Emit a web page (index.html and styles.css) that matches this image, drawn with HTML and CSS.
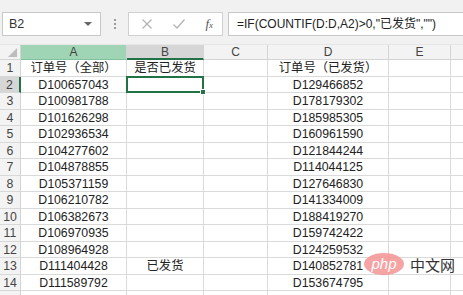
FILE: index.html
```html
<!DOCTYPE html>
<html>
<head>
<meta charset="utf-8">
<link rel="stylesheet" href="styles.css">
</head>
<body>
<div class="app">
  <div class="toolbar">
    <div class="namebox"><span>B2</span><span class="caret"></span></div>
    <div class="dots"><i></i><i></i><i></i></div>
    <div class="fbtns">
      <svg class="ic" width="12" height="12" viewBox="0 0 12 12"><path d="M1.5 1.5L10.5 10.5M10.5 1.5L1.5 10.5" stroke="#b4b4b4" stroke-width="1.3" fill="none"/></svg>
      <svg class="ic" width="14" height="12" viewBox="0 0 14 12"><path d="M1.5 6.5L5 10L12.5 1.5" stroke="#b4b4b4" stroke-width="1.3" fill="none"/></svg>
      <span class="fx"><i>f</i><sub>x</sub></span>
    </div>
    <div class="fbox">=IF(COUNTIF(D:D,A2)&gt;0,"已发货","")</div>
  </div>
  <div class="sheet">
    <div class="corner"></div>
    <div class="ch hlA">A</div>
    <div class="ch selB">B</div>
    <div class="ch">C</div>
    <div class="ch">D</div>
    <div class="ch">E</div>
    <div class="ch"></div>

    <div class="rh">1</div><div class="c">订单号（全部）</div><div class="c">是否已发货</div><div class="c"></div><div class="c">订单号（已发货）</div><div class="c"></div><div class="c"></div>
    <div class="rh sel">2</div><div class="c">D100657043</div><div class="c active"><span class="handle"></span></div><div class="c"></div><div class="c">D129466852</div><div class="c"></div><div class="c"></div>
    <div class="rh">3</div><div class="c">D100981788</div><div class="c"></div><div class="c"></div><div class="c">D178179302</div><div class="c"></div><div class="c"></div>
    <div class="rh">4</div><div class="c">D101626298</div><div class="c"></div><div class="c"></div><div class="c">D185985305</div><div class="c"></div><div class="c"></div>
    <div class="rh">5</div><div class="c">D102936534</div><div class="c"></div><div class="c"></div><div class="c">D160961590</div><div class="c"></div><div class="c"></div>
    <div class="rh">6</div><div class="c">D104277602</div><div class="c"></div><div class="c"></div><div class="c">D121844244</div><div class="c"></div><div class="c"></div>
    <div class="rh">7</div><div class="c">D104878855</div><div class="c"></div><div class="c"></div><div class="c">D114044125</div><div class="c"></div><div class="c"></div>
    <div class="rh">8</div><div class="c">D105371159</div><div class="c"></div><div class="c"></div><div class="c">D127646830</div><div class="c"></div><div class="c"></div>
    <div class="rh">9</div><div class="c">D106210782</div><div class="c"></div><div class="c"></div><div class="c">D141334009</div><div class="c"></div><div class="c"></div>
    <div class="rh">10</div><div class="c">D106382673</div><div class="c"></div><div class="c"></div><div class="c">D188419270</div><div class="c"></div><div class="c"></div>
    <div class="rh">11</div><div class="c">D106970935</div><div class="c"></div><div class="c"></div><div class="c">D159742422</div><div class="c"></div><div class="c"></div>
    <div class="rh">12</div><div class="c">D108964928</div><div class="c"></div><div class="c"></div><div class="c">D124259532</div><div class="c"></div><div class="c"></div>
    <div class="rh">13</div><div class="c">D111404428</div><div class="c">已发货</div><div class="c"></div><div class="c">D140852781</div><div class="c"></div><div class="c"></div>
    <div class="rh">14</div><div class="c">D111589792</div><div class="c"></div><div class="c"></div><div class="c">D153674795</div><div class="c"></div><div class="c"></div>
    <div class="rh"></div><div class="c"></div><div class="c"></div><div class="c"></div><div class="c"></div><div class="c"></div><div class="c"></div>
  </div>
  <div class="watermark"><span class="php">php</span><span class="cn">中文网</span></div>
</div>
</body>
</html>
```
FILE: styles.css
```css
* { box-sizing: border-box; }
html, body { margin: 0; padding: 0; }
body {
  width: 463px; height: 295px; overflow: hidden;
  font-family: "Liberation Sans", Arial, "Noto Sans CJK SC", sans-serif;
  font-size: 12px; color: #222; background: #fff;
}
.app { position: relative; width: 463px; height: 295px; overflow: hidden; }

.toolbar {
  height: 45px; background: #f1f1f1;
  display: flex; align-items: flex-start;
  padding: 12px 0 0 2px;
  border-bottom: 1px solid #e6e6e6;
}
.namebox {
  width: 99px; height: 24px; background: #fff; border: 1px solid #c8c8c8;
  display: flex; align-items: center; justify-content: space-between;
  padding: 0 6px 0 6px; font-size: 12.5px; color: #333;
}
.caret { width: 0; height: 0; border-left: 4px solid transparent; border-right: 4px solid transparent; border-top: 4px solid #666; margin-right: 2px; }
.dots { width: 27px; height: 24px; display: flex; flex-direction: column; align-items: center; justify-content: center; gap: 2px; }
.dots i { width: 2px; height: 2px; background: #9a9a9a; display: block; }
.fbtns {
  width: 95px; height: 24px; background: #fff; border: 1px solid #d0d0d0;
  display: flex; align-items: center; justify-content: space-between; padding: 0 9px 0 12px;
}
.fx { font-family: "Liberation Serif", serif; color: #555; font-size: 13px; }
.fx sub { font-size: 9px; font-style: italic; vertical-align: baseline; }
.fbox {
  margin-left: 5px; flex: 1; height: 24px; background: #fff; border: 1px solid #c8c8c8; border-right: none;
  padding: 0 0 0 8px; line-height: 22px; font-size: 12px; color: #222; white-space: nowrap;
}

.sheet {
  display: grid;
  grid-template-columns: 21px 106px 77px 64px 121px 62px 20px;
  grid-template-rows: 15px repeat(15, 16.5px);
}
.corner { background: #f3f3f3; border-right: 1px solid #d4d4d4; border-bottom: 1px solid #d4d4d4; position: relative; }
.corner::after { content: ""; position: absolute; right: 3px; bottom: 2px; border-left: 9px solid transparent; border-bottom: 9px solid #bdbdbd; }
.ch {
  background: #f3f3f3; color: #444; text-align: center; line-height: 14px;
  border-right: 1px solid #d4d4d4; border-bottom: 1px solid #d4d4d4; font-size: 12px;
}
.ch.hlA { background: #9fd5b5; border-bottom: 1px solid #7fc29d; }
.ch.selB { background: #d6d6d6; border-bottom: 2px solid #217346; }
.rh {
  background: #f3f3f3; color: #444; text-align: center; line-height: 16px;
  border-right: 1px solid #d4d4d4; border-bottom: 1px solid #d8d8d8; font-size: 12.3px;
}
.rh.sel { background: #d6d6d6; border-right: 2px solid #217346; }
.c {
  border-right: 1px solid #dadada; border-bottom: 1px solid #dadada;
  text-align: center; line-height: 16px; white-space: nowrap; font-size: 12.3px; color: #222;
}
.c.active { position: relative; border: 2px solid #217346; margin: -1px 0 0 -1px; }
.handle { position: absolute; right: -4px; bottom: -4px; width: 6px; height: 6px; background: #217346; border: 1px solid #fff; }

.watermark { position: absolute; left: 364px; top: 253px; display: flex; align-items: center; gap: 6px; }
.php {
  width: 40px; height: 22px; border-radius: 50%; background: #f59393;
  color: #fff; font-style: italic; font-size: 15px; line-height: 21px; text-align: center;
  font-family: "Liberation Sans", sans-serif; opacity: 0.85;
}
.cn { font-size: 15px; color: #333; font-family: "Noto Sans CJK SC", sans-serif; }
```
